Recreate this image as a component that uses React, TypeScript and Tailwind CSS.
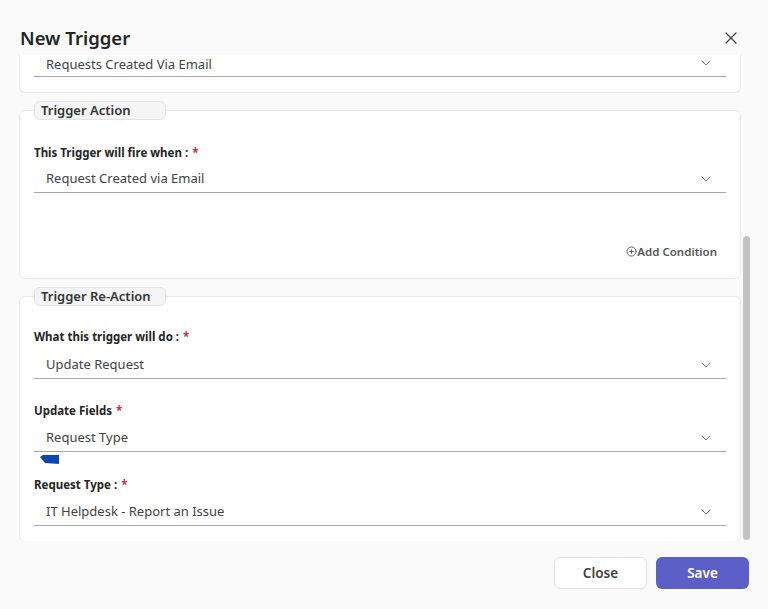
import { ChevronDown, CirclePlus, X } from 'lucide-react';

const font = { fontFamily: '"Noto Sans", "Open Sans", sans-serif' };

function Select({ value, short = false }: { value: string; short?: boolean }) {
  return (
    <div
      className={`flex items-center justify-between border-b border-[#a8a8a8] pl-3 pr-3 ${short ? 'h-[22px] items-start' : 'h-[28px]'}`}
    >
      <span className="text-[13px] text-[#424242]">{value}</span>
      <ChevronDown className="h-4 w-4 text-[#707070]" strokeWidth={1.4} />
    </div>
  );
}

function Label({ text, colon = true }: { text: string; colon?: boolean }) {
  return (
    <div className="flex h-4 items-center text-[11.5px] font-bold text-[#242424]">
      {text}
      {colon ? ' :' : ''}
      <span className="ml-1 text-[#c4314b]">*</span>
    </div>
  );
}

function Card({ title, pb, children }: { title: string; pb: string; children: React.ReactNode }) {
  return (
    <fieldset className={`rounded-md border border-[#e8e8e8] bg-white px-[14px] ${pb}`}>
      <legend className="w-[132px] rounded-md border border-[#e2e2e2] bg-[#f5f5f5] px-[6px] text-[13px] font-semibold leading-[17px] text-[#333]">
        {title}
      </legend>
      {children}
    </fieldset>
  );
}

export default function App() {
  return (
    <div className="flex h-[609px] w-full flex-col bg-[#fafafa]" style={font}>
      {/* Header */}
      <div className="flex h-[55px] shrink-0 items-center justify-between pl-5 pr-[27px] pt-[21px]">
        <h1 className="text-[18.5px] font-semibold text-[#242424]">New Trigger</h1>
        <X className="h-5 w-5 text-[#424242]" strokeWidth={1.5} />
      </div>

      {/* Scroll area */}
      <div className="flex h-[486px] shrink-0 overflow-hidden pl-[19px] pr-[18px]">
        <div className="flex flex-1 flex-col">
          {/* Partially scrolled card */}
          <div className="rounded-b-md border-x border-b border-[#e8e8e8] bg-white px-[14px] pb-[15px]">
            <Select value="Requests Created Via Email" short />
          </div>

          <div className="mt-2">
            <Card title="Trigger Action" pb="pb-[18px]">
              <div className="mt-[25px]">
                <Label text="This Trigger will fire when" />
              </div>
              <div className="mt-1">
                <Select value="Request Created via Email" />
              </div>
              <div className="mt-[50px] flex items-center justify-end pr-[9px] text-[11.5px] font-semibold text-[#555]">
                <CirclePlus className="h-[11px] w-[11px]" strokeWidth={2} />
                Add Condition
              </div>
            </Card>
          </div>

          <div className="mt-2">
            <Card title="Trigger Re-Action" pb="pb-[15px]">
              <div className="mt-[22px]">
                <Label text="What this trigger will do" />
              </div>
              <div className="mt-[7px]">
                <Select value="Update Request" />
              </div>
              <div className="mt-[23px]">
                <Label text="Update Fields" colon={false} />
              </div>
              <div className="mt-[6px]">
                <Select value="Request Type" />
              </div>
              <svg width="20" height="9" viewBox="0 0 20 9" className="ml-[6px] mt-[3px] block">
                <polygon points="3,0 19,0 19,9 5,8 0,2" fill="#0b47b3" />
              </svg>
              <div className="mt-[12px]">
                <Label text="Request Type" />
              </div>
              <div className="mt-[6px]">
                <Select value="IT Helpdesk - Report an Issue" />
              </div>
            </Card>
          </div>
        </div>

        {/* Scrollbar */}
        <div className="ml-[2px] w-[7px]">
          <div className="mt-[181px] h-[304px] rounded-full bg-[#c2c2c2]" />
        </div>
      </div>

      {/* Footer */}
      <div className="flex justify-end gap-[9px] pr-[19px] pt-4">
        <button className="h-[32px] w-[93px] rounded-md border border-[#e0e0e0] bg-white text-[13.5px] font-semibold text-[#424242]">
          Close
        </button>
        <button className="h-[32px] w-[93px] rounded-md bg-[#5b5fc7] text-[13.5px] font-semibold text-white">
          Save
        </button>
      </div>
    </div>
  );
}
